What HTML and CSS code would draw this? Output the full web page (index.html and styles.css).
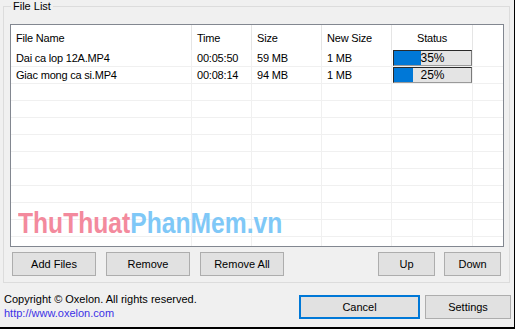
FILE: index.html
```html
<!DOCTYPE html>
<html>
<head>
<meta charset="utf-8">
<link rel="stylesheet" href="styles.css">
</head>
<body>
<div class="window">
  <fieldset class="group">
    <legend class="legend">File List</legend>
    <div class="list">
      <div class="row head">
        <div class="cell">File Name</div>
        <div class="cell">Time</div>
        <div class="cell">Size</div>
        <div class="cell">New Size</div>
        <div class="cell center">Status</div>
        <div class="cell last"></div>
      </div>
      <div class="row">
        <div class="cell">Dai ca lop 12A.MP4</div>
        <div class="cell">00:05:50</div>
        <div class="cell">59 MB</div>
        <div class="cell">1 MB</div>
        <div class="cell bar-cell"><div class="bar"><div class="fill" style="width:35%"></div><span class="pct">35%</span></div></div>
        <div class="cell last"></div>
      </div>
      <div class="row">
        <div class="cell">Giac mong ca si.MP4</div>
        <div class="cell">00:08:14</div>
        <div class="cell">94 MB</div>
        <div class="cell">1 MB</div>
        <div class="cell bar-cell"><div class="bar"><div class="fill" style="width:25%"></div><span class="pct">25%</span></div></div>
        <div class="cell last"></div>
      </div>
      <div class="row"><div class="cell"></div><div class="cell"></div><div class="cell"></div><div class="cell"></div><div class="cell"></div><div class="cell last"></div></div>
      <div class="row"><div class="cell"></div><div class="cell"></div><div class="cell"></div><div class="cell"></div><div class="cell"></div><div class="cell last"></div></div>
      <div class="row"><div class="cell"></div><div class="cell"></div><div class="cell"></div><div class="cell"></div><div class="cell"></div><div class="cell last"></div></div>
      <div class="row"><div class="cell"></div><div class="cell"></div><div class="cell"></div><div class="cell"></div><div class="cell"></div><div class="cell last"></div></div>
      <div class="row"><div class="cell"></div><div class="cell"></div><div class="cell"></div><div class="cell"></div><div class="cell"></div><div class="cell last"></div></div>
      <div class="row"><div class="cell"></div><div class="cell"></div><div class="cell"></div><div class="cell"></div><div class="cell"></div><div class="cell last"></div></div>
      <div class="row"><div class="cell"></div><div class="cell"></div><div class="cell"></div><div class="cell"></div><div class="cell"></div><div class="cell last"></div></div>
      <div class="row"><div class="cell"></div><div class="cell"></div><div class="cell"></div><div class="cell"></div><div class="cell"></div><div class="cell last"></div></div>
      <div class="row"><div class="cell"></div><div class="cell"></div><div class="cell"></div><div class="cell"></div><div class="cell"></div><div class="cell last"></div></div>
      <div class="row"><div class="cell"></div><div class="cell"></div><div class="cell"></div><div class="cell"></div><div class="cell"></div><div class="cell last"></div></div>
    </div>
    <div class="btnrow">
      <div class="btngroup">
        <button class="btn wide">Add Files</button>
        <button class="btn wide">Remove</button>
        <button class="btn wide">Remove All</button>
      </div>
      <div class="btngroup right">
        <button class="btn small">Up</button>
        <button class="btn small">Down</button>
      </div>
    </div>
  </fieldset>
  <div class="footer">
    <div class="copy">
      <div>Copyright © Oxelon. All rights reserved.</div>
      <a class="link" href="#">http://www.oxelon.com</a>
    </div>
    <div class="actions">
      <button class="btn cancel">Cancel</button>
      <button class="btn settings">Settings</button>
    </div>
  </div>
  <div class="watermark"><span class="wm-pink">ThuThuat</span><span class="wm-blue">PhanMem.vn</span></div>
</div>
</body>
</html>
```

FILE: styles.css
```css
* { box-sizing: border-box; }
html, body { margin: 0; padding: 0; }
body {
  background: #f0f0f0;
  font-family: "Liberation Sans", Arial, sans-serif;
  font-size: 11px;
  color: #000;
}
.window {
  position: relative;
  width: 515px;
  height: 329px;
  background: #f0f0f0;
  border-right: 1px solid #000;
  border-bottom: 2px solid #000;
  overflow: hidden;
}
.group {
  margin: 0 0 0 3px;
  width: 507px;
  border: 1px solid #dcdcdc;
  padding: 11px 5px 6px 6px;
  min-width: 0;
}
.legend {
  margin-left: 1px;
  padding: 0 2px;
  line-height: 13px;
  font-size: 11px;
}
.list {
  height: 223px;
  border: 1px solid #828790;
  background: #fff;
  overflow: hidden;
}
.row {
  display: grid;
  grid-template-columns: 181px 60px 70px 70px 81px 1fr;
  height: 17px;
  border-bottom: 1px solid #f0f0f0;
  letter-spacing: -0.2px;
}
.row.head {
  height: 25px;
  border-bottom: 0;
}
.cell {
  display: flex;
  align-items: center;
  padding-left: 5px;
  border-right: 1px solid #f0f0f0;
  white-space: nowrap;
  overflow: hidden;
}
.head .cell { border-right-color: #e5e5e5; }
.cell.last { border-right: 0; }
.cell.center { justify-content: center; padding-left: 0; }
.bar-cell { padding-left: 1px; }
.bar {
  position: relative;
  width: 79px;
  height: 16px;
  background: #e4e4e4;
  border-top: 1px solid #2a2a2a;
  border-left: 1px solid #2a2a2a;
  border-right: 1px solid #7a7a7a;
  border-bottom: 1px solid #9a9a9a;
}
.fill {
  height: 100%;
  background: #0078d7;
}
.pct {
  position: absolute;
  left: 0; right: 0; top: 0; bottom: 0;
  display: flex;
  align-items: center;
  justify-content: center;
  font-size: 12px;
  letter-spacing: 0;
}
.btnrow {
  display: flex;
  justify-content: space-between;
  margin-top: 5px;
}
.btngroup {
  display: flex;
  gap: 10px;
  margin-left: 2px;
}
.btngroup.right {
  gap: 9px;
  margin-left: 0;
  margin-right: 3px;
}
.btn {
  height: 24px;
  background: #e1e1e1;
  border: 1px solid #adadad;
  font-family: "Liberation Sans", Arial, sans-serif;
  font-size: 11px;
  color: #000;
  padding: 0;
  margin: 0;
}
.btn.wide { width: 84px; }
.btn.small { width: 57px; }
.footer {
  display: flex;
  justify-content: space-between;
  align-items: flex-start;
}
.copy {
  margin-top: 9px;
  padding-left: 4px;
  line-height: 14px;
  display: flex;
  flex-direction: column;
}
.link {
  color: #3c32e6;
  text-decoration: none;
}
.actions {
  display: flex;
  gap: 5px;
  margin-top: 12px;
  margin-right: 3px;
}
.btn.cancel {
  width: 121px;
  border: 2px solid #0078d7;
}
.btn.settings { width: 86px; }
.watermark {
  position: absolute;
  left: 18px;
  top: 209px;
  font-family: "Liberation Sans", Arial, sans-serif;
  font-weight: bold;
  font-size: 29px;
  line-height: 29px;
  white-space: nowrap;
  transform: scaleX(0.85);
  transform-origin: left top;
  pointer-events: none;
}
.wm-pink { color: #f38a9d; }
.wm-blue { color: #7fc8f7; }
```
